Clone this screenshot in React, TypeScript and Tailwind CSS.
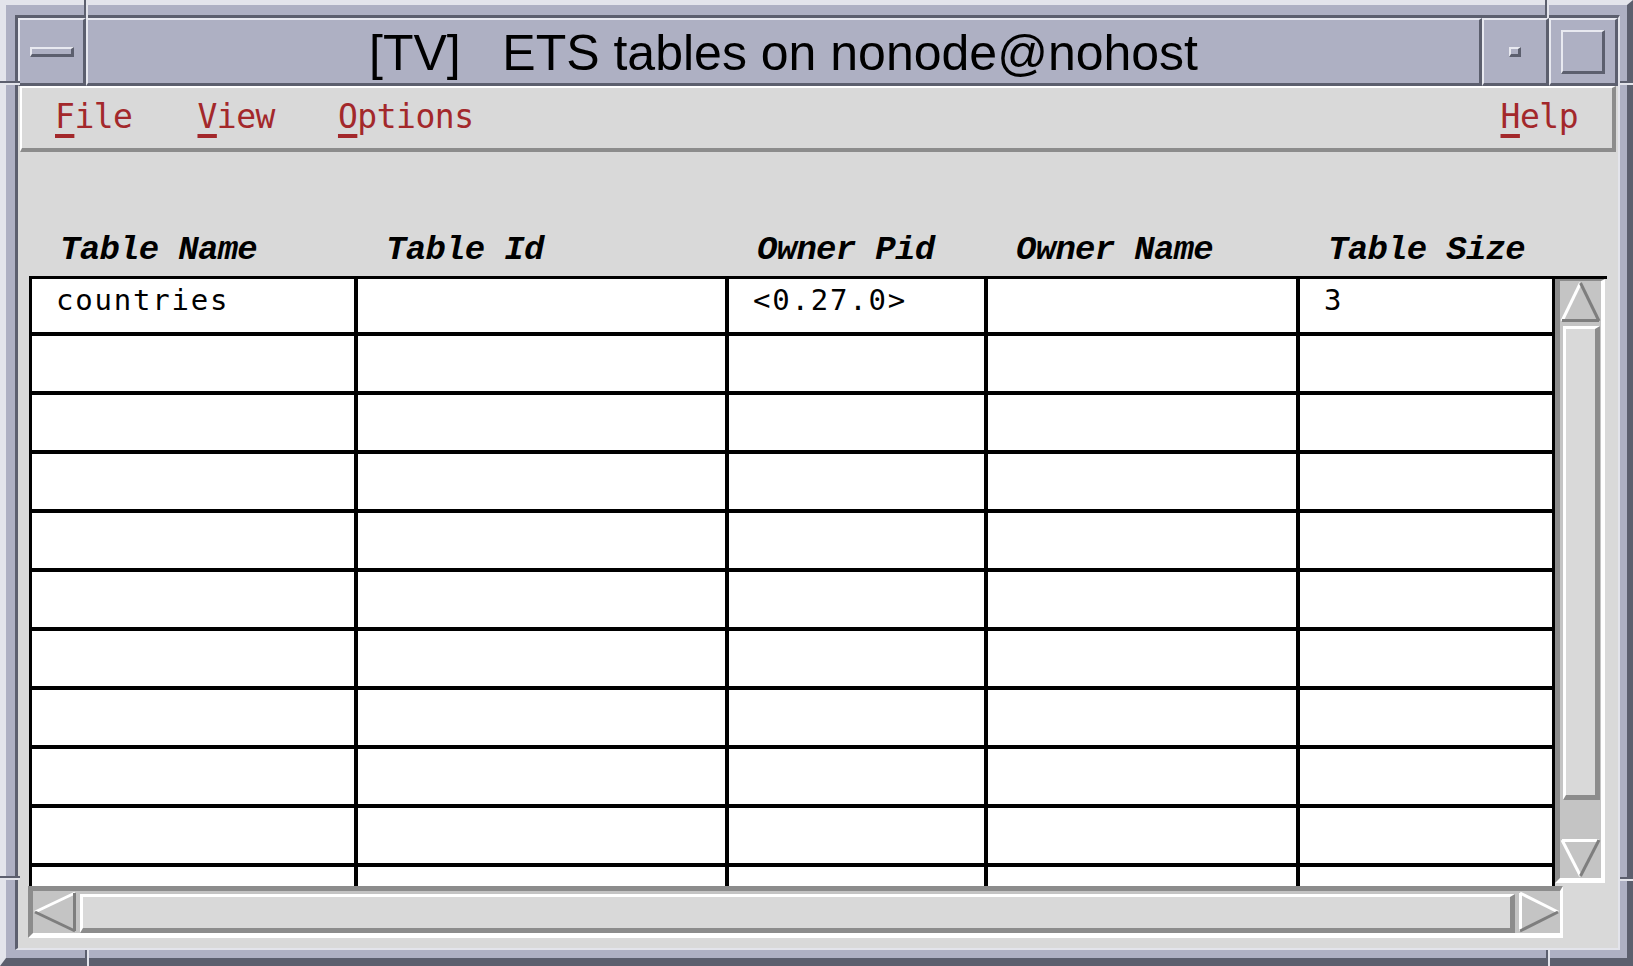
import React from 'react';

const COLS = ['w-[326px]', 'w-[371px]', 'w-[259px]', 'w-[312px]', 'w-[252px]'];
const CELL_BORDER = ['border-r-4', 'border-r-4', 'border-r-4', 'border-r-4', ''];
const HEADERS = ['Table Name', 'Table Id', 'Owner Pid', 'Owner Name', 'Table Size'];
const ROWS: string[][] = [
  ['countries', '', '<0.27.0>', '', '3'],
  ...Array.from({ length: 10 }, () => ['', '', '', '', '']),
];

const bevel =
  'border-t-2 border-l-2 border-t-[#e8e9f0] border-l-[#e8e9f0] border-b-[3px] border-r-[3px] border-b-[#5c5f6e] border-r-[#5c5f6e]';

const MenuItem = ({ first, rest, className = '' }: { first: string; rest: string; className?: string }) => (
  <span className={`text-[#a3282b] ${className}`}>
    <span className="underline decoration-4 underline-offset-[6px] decoration-[#a3282b]">{first}</span>
    {rest}
  </span>
);

const UpArrow = () => (
  <svg width="41" height="42" viewBox="0 0 41 42">
    <line x1="20.5" y1="2" x2="2" y2="40" stroke="#ffffff" strokeWidth="3" />
    <line x1="20.5" y1="2" x2="39" y2="40" stroke="#7e7e7e" strokeWidth="3" />
    <line x1="2" y1="39.5" x2="39" y2="39.5" stroke="#7e7e7e" strokeWidth="3" />
  </svg>
);

const DownArrow = () => (
  <svg width="41" height="40" viewBox="0 0 41 40">
    <line x1="2" y1="2.5" x2="39" y2="2.5" stroke="#ffffff" strokeWidth="3" />
    <line x1="2" y1="2" x2="20.5" y2="38" stroke="#ffffff" strokeWidth="3" />
    <line x1="39" y1="2" x2="20.5" y2="38" stroke="#7e7e7e" strokeWidth="3" />
  </svg>
);

const LeftArrow = () => (
  <svg width="44" height="42" viewBox="0 0 44 42">
    <line x1="2" y1="21" x2="42" y2="2" stroke="#ffffff" strokeWidth="3" />
    <line x1="2" y1="21" x2="42" y2="40" stroke="#7e7e7e" strokeWidth="3" />
    <line x1="41.5" y1="2" x2="41.5" y2="40" stroke="#7e7e7e" strokeWidth="3" />
  </svg>
);

const RightArrow = () => (
  <svg width="42" height="42" viewBox="0 0 42 42">
    <line x1="2.5" y1="2" x2="2.5" y2="40" stroke="#ffffff" strokeWidth="3" />
    <line x1="2" y1="2" x2="40" y2="21" stroke="#ffffff" strokeWidth="3" />
    <line x1="2" y1="40" x2="40" y2="21" stroke="#7e7e7e" strokeWidth="3" />
  </svg>
);

export default function App() {
  return (
    <div className="relative w-[1633px] h-[966px] flex bg-[#aeb0c3] border-t-[5px] border-l-[6px] border-r-[6px] border-b-[8px] border-t-[#e3e4eb] border-l-[#e3e4eb] border-r-[#5c5f6e] border-b-[#5c5f6e] pt-[10px] pl-[9px] pr-[7px] pb-[8px]">
      {/* frame corner notches */}
      <div className="absolute left-[78px] top-[-5px] w-[2px] h-[18px] bg-[#5c5f6e]" />
      <div className="absolute left-[80px] top-[-5px] w-[2px] h-[18px] bg-[#e3e4eb]" />
      <div className="absolute left-[-6px] top-[76px] w-[20px] h-[2px] bg-[#5c5f6e]" />
      <div className="absolute left-[-6px] top-[78px] w-[20px] h-[2px] bg-[#e3e4eb]" />
      <div className="absolute left-[1539px] top-[-5px] w-[2px] h-[18px] bg-[#5c5f6e]" />
      <div className="absolute left-[1541px] top-[-5px] w-[2px] h-[18px] bg-[#e3e4eb]" />
      <div className="absolute left-[1614px] top-[76px] w-[19px] h-[2px] bg-[#5c5f6e]" />
      <div className="absolute left-[1614px] top-[78px] w-[19px] h-[2px] bg-[#e3e4eb]" />
      <div className="absolute left-[79px] top-[945px] w-[2px] h-[18px] bg-[#5c5f6e]" />
      <div className="absolute left-[81px] top-[945px] w-[2px] h-[18px] bg-[#e3e4eb]" />
      <div className="absolute left-[-6px] top-[871px] w-[20px] h-[2px] bg-[#5c5f6e]" />
      <div className="absolute left-[-6px] top-[873px] w-[20px] h-[2px] bg-[#e3e4eb]" />
      <div className="absolute left-[1540px] top-[945px] w-[2px] h-[18px] bg-[#5c5f6e]" />
      <div className="absolute left-[1542px] top-[945px] w-[2px] h-[18px] bg-[#e3e4eb]" />
      <div className="absolute left-[1614px] top-[872px] w-[19px] h-[2px] bg-[#5c5f6e]" />
      <div className="absolute left-[1614px] top-[874px] w-[19px] h-[2px] bg-[#e3e4eb]" />

      <div className="flex-1 flex flex-col border-t-[3px] border-l-[3px] border-t-[#5c5f6e] border-l-[#5c5f6e] border-r-2 border-b-2 border-r-[#e3e4eb] border-b-[#e3e4eb]">
        {/* Title bar */}
        <div className="h-[68px] flex">
          <div className={`w-[68px] flex items-center justify-center ${bevel}`}>
            <div className="w-[44px] h-[10px] border-t-2 border-l-2 border-t-[#e8e9f0] border-l-[#e8e9f0] border-b-[3px] border-r-[3px] border-b-[#5c5f6e] border-r-[#5c5f6e]" />
          </div>
          <div className={`flex-1 flex items-center justify-center pt-[3px] ${bevel}`}>
            <span className="font-['Liberation_Sans',Arial,sans-serif] text-[50px] text-black whitespace-pre">
              {'[TV]   ETS tables on nonode@nohost'}
            </span>
          </div>
          <div className={`w-[67px] flex items-center justify-center ${bevel}`}>
            <div className="w-[12px] h-[10px] border-t-2 border-l-2 border-t-[#e8e9f0] border-l-[#e8e9f0] border-b-[3px] border-r-[3px] border-b-[#5c5f6e] border-r-[#5c5f6e]" />
          </div>
          <div className={`w-[69px] flex items-center justify-center ${bevel}`}>
            <div className="w-[44px] h-[44px] border-t-2 border-l-2 border-t-[#e8e9f0] border-l-[#e8e9f0] border-b-[3px] border-r-[3px] border-b-[#5c5f6e] border-r-[#5c5f6e]" />
          </div>
        </div>

        {/* Body */}
        <div className="flex-1 flex flex-col bg-[#d9d9d9]">
          {/* Menu bar */}
          <div className="mx-[2px] h-[66px] flex items-start pt-[12px] pr-[34px] border-t-2 border-l-2 border-t-white border-l-white border-b-4 border-r-4 border-b-[#8c8c8c] border-r-[#8c8c8c] font-['DejaVu_Sans_Mono',monospace] text-[33px] leading-[33px] tracking-[-0.5px]">
            <MenuItem first="F" rest="ile" className="ml-[33px]" />
            <MenuItem first="V" rest="iew" className="ml-[65px]" />
            <MenuItem first="O" rest="ptions" className="ml-[63px]" />
            <MenuItem first="H" rest="elp" className="ml-auto" />
          </div>

          {/* Column headers */}
          <div className="h-[124px] ml-[14px] flex pt-[81px] font-['Liberation_Mono',monospace] font-bold italic text-[34px] leading-[34px] tracking-[-0.7px] text-black">
            {HEADERS.map((h, i) => (
              <div key={h} className={`${COLS[i]} pl-[28px] whitespace-pre`}>
                {h}
              </div>
            ))}
          </div>

          {/* Table + vertical scrollbar */}
          <div className="ml-[11px] w-[1578px] h-[610px] flex border-t-[3px] border-t-black">
            <div className="w-[1526px] h-[607px] overflow-hidden bg-white border-l-[3px] border-r-[3px] border-black">
              {ROWS.map((row, r) => (
                <div
                  key={r}
                  className={`flex border-b-4 border-black ${r === 0 ? 'h-[57px]' : 'h-[59px]'} shrink-0`}
                >
                  {row.map((cell, c) => (
                    <div
                      key={c}
                      className={`${COLS[c]} ${CELL_BORDER[c]} border-black h-full pl-[24px] pt-[7px] font-['DejaVu_Sans_Mono',monospace] text-[29px] leading-[29px] tracking-[1.8px] text-black whitespace-pre`}
                    >
                      {cell}
                    </div>
                  ))}
                </div>
              ))}
            </div>
            <div className="w-[50px] h-[604px] flex flex-col bg-[#c4c4c4] border-t-2 border-l-[5px] border-t-[#8c8c8c] border-l-[#8c8c8c] border-r-4 border-b-[5px] border-r-white border-b-white">
              <div className="h-[42px] shrink-0">
                <UpArrow />
              </div>
              <div className="mt-[3px] ml-[3px] mr-[1px] h-[474px] shrink-0 bg-[#d9d9d9] border-t-[3px] border-l-[3px] border-t-white border-l-white border-b-[5px] border-r-[5px] border-b-[#8c8c8c] border-r-[#8c8c8c]" />
              <div className="flex-1" />
              <div className="h-[40px] shrink-0">
                <DownArrow />
              </div>
            </div>
          </div>

          {/* Horizontal scrollbar */}
          <div className="ml-[10px] w-[1535px] h-[52px] flex bg-[#c4c4c4] border-t-[5px] border-l-[5px] border-t-[#8c8c8c] border-l-[#8c8c8c] border-b-[5px] border-r-[3px] border-b-white border-r-white">
            <div className="w-[44px] shrink-0">
              <LeftArrow />
            </div>
            <div className="flex-1 mx-[3px] mt-[3px] bg-[#d9d9d9] border-t-[3px] border-l-[3px] border-t-white border-l-white border-b-[5px] border-r-[5px] border-b-[#8c8c8c] border-r-[#8c8c8c]" />
            <div className="w-[42px] shrink-0">
              <RightArrow />
            </div>
          </div>
        </div>
      </div>
    </div>
  );
}
